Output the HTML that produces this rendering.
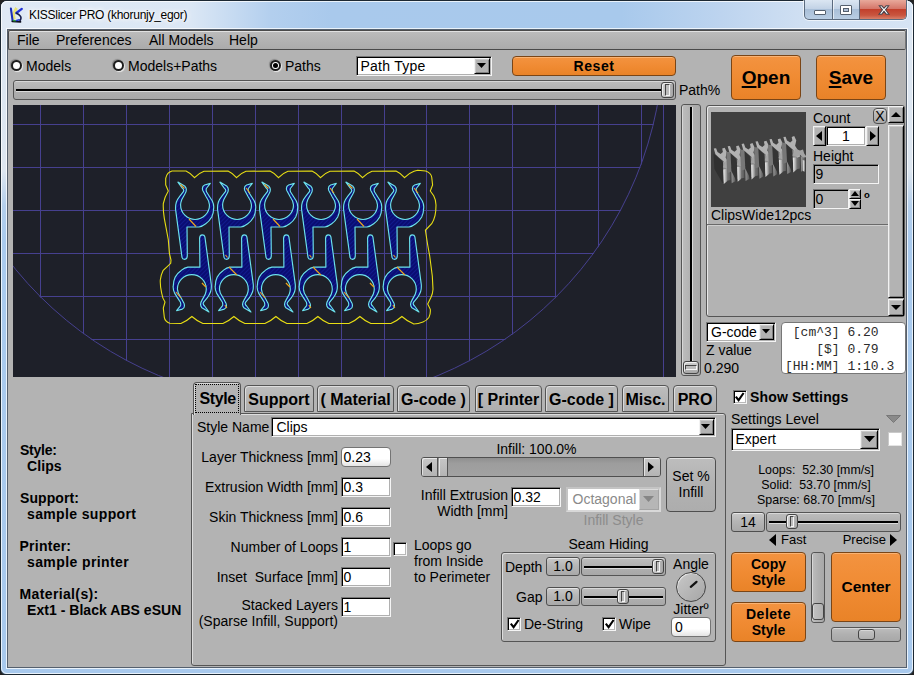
<!DOCTYPE html>
<html><head><meta charset="utf-8"><title>KISSlicer PRO</title>
<style>
html,body{margin:0;padding:0;}
body{width:914px;height:675px;overflow:hidden;position:relative;background:#222;font-family:"Liberation Sans",Arial,sans-serif;font-size:14px;color:#000;}
#win{position:absolute;left:0;top:0;width:914px;height:675px;overflow:hidden;}
#win div,#win svg{position:absolute;box-sizing:border-box;}
#frame{left:0;top:0;width:914px;height:675px;border-radius:7px 7px 6px 6px;background:linear-gradient(#dbe6f2 0px,#dde6f0 170px,#b4cfec 205px,#a9caee 240px,#a8c9ed 675px);border:1px solid #1c2833;}
#titlebg{left:1px;top:1px;width:912px;height:29px;border-radius:6px 6px 0 0;background:linear-gradient(90deg,#dfe9f5 0,#dbe7f5 190px,#b3cfee 270px,#a9c9ec 330px,#a8c9ec 620px,#bdd4ef 720px,#cfdff2 800px,#d6e4f4 912px);}
#frame2{left:1px;top:1px;width:912px;height:673px;border-radius:6px;border:1px solid rgba(255,255,255,.75);}
#client{left:8px;top:30px;width:898px;height:637px;background:#b3b3b3;overflow:hidden;}
#c{left:-8px;top:-30px;width:914px;height:675px;}
#clientedge{left:7px;top:29px;width:900px;height:639px;border:1px solid #55606e;box-shadow:0 0 0 1px rgba(255,255,255,.75);}
.t{white-space:nowrap;line-height:16px;height:16px;}
.b{font-weight:bold;}
.r{text-align:right;}
.ct{text-align:center;}
/* raised gray box */
.up{background:linear-gradient(#c9c9c9,#b6b6b6 45%,#a9a9a9);border:1px solid #4f4f4f;border-radius:3px;box-shadow:inset 0 1px 0 rgba(255,255,255,.55);}
/* orange button */
.ob u{text-underline-offset:2px;text-decoration-thickness:2px;}
.ob{background:linear-gradient(#f39340,#f08b33 50%,#e98328);border:1px solid #7a4516;border-radius:4px;box-shadow:inset 0 1px 0 rgba(255,200,150,.6);font-weight:bold;text-align:center;white-space:nowrap;}
/* sunken input */
.in{background:#fff;border:1px solid;border-color:#777 #f4f4f4 #f4f4f4 #777;box-shadow:inset 1px 1px 0 #000, inset -1px -1px 0 #b0b0b0;white-space:nowrap;line-height:17px;padding-left:1.5px;padding-top:1px;overflow:hidden;}
.ing{background:#b3b3b3;}
/* slider track box */
.sl{background:linear-gradient(#bdbdbd,#b0b0b0 50%,#a8a8a8);border:1px solid #555;border-radius:3px;box-shadow:inset 0 1px 0 rgba(255,255,255,.4);}
.slv{background:linear-gradient(90deg,#bdbdbd,#b0b0b0 50%,#a8a8a8);border:1px solid #555;border-radius:3px;box-shadow:inset 1px 0 0 rgba(255,255,255,.4);}
.kn{background:linear-gradient(90deg,#d0d0d0,#bdbdbd 50%,#a6a6a6);border:1px solid #444;border-radius:3px;box-shadow:inset 1px 1px 0 rgba(255,255,255,.7);}
.knv{background:linear-gradient(#d0d0d0,#bdbdbd 50%,#a6a6a6);border:1px solid #444;border-radius:3px;box-shadow:inset 1px 1px 0 rgba(255,255,255,.7);}
.blk{background:#000;box-shadow:0 1px 0 rgba(255,255,255,.55);}
.blkv{background:#000;box-shadow:1px 0 0 rgba(255,255,255,.55);}
.cb{width:14px;height:14px;background:#fff;border:1px solid;border-color:#777 #f4f4f4 #f4f4f4 #777;box-shadow:inset 1px 1px 0 #000, inset -1px -1px 0 #b8b8b8;}
.radio{width:11px;height:11px;border-radius:50%;background:#fff;border:2px solid #1e1e1e;box-shadow:-1px -1px 1px rgba(0,0,0,.25), 1px 1px 1px rgba(255,255,255,.75);}
svg{overflow:visible;}
.tab{height:27px;border:1px solid #555;border-radius:4px 4px 0 0;background:linear-gradient(#bdbdbd,#aeaeae);box-shadow:inset 1px 1px 0 rgba(255,255,255,.5);font-weight:bold;font-size:16px;line-height:27px;text-align:center;white-space:nowrap;}
.tab.sel{background:#b3b3b3;line-height:31px;border-bottom:none;}
.foc{border:1px dotted #000;}
.cbtn{background:#b3b3b3;border:1px solid;border-color:#f2f2f2 #000 #000 #f2f2f2;box-shadow:inset 1px 1px 0 #c8c8c8, inset -1px -1px 0 #808080;}

</style></head><body>
<div id="win">
<div id="frame"></div><div id="titlebg"></div><div id="frame2"></div>
<div id="clientedge"></div>
<svg id="appicon" style="left:0;top:0" width="30" height="30" viewBox="0 0 30 30">
<path d="M15.3 7 L17.7 8.7 L15 14.3 L15.7 19.3 L13.3 19 L12.3 13.3 Z" fill="#e9e274"/>
<path d="M10.9 8.6 L12.6 20.6" stroke="#1c2fb8" stroke-width="2.1" stroke-linecap="round" fill="none"/>
<path d="M21.8 8.9 L16.3 13" stroke="#2232d8" stroke-width="2.3" stroke-linecap="round" fill="none"/>
<path d="M16.6 13.2 Q21 15.5 21 18 Q20.8 20 19.8 21" stroke="#141c4a" stroke-width="1.6" fill="none" stroke-linecap="round"/>
<path d="M12.3 21.4 L20.5 21.9" stroke="#0c1020" stroke-width="1.7" stroke-linecap="round" fill="none"/>
<path d="M13.5 20.5 L15.2 20.7" stroke="#2e9a3c" stroke-width="1.6" stroke-linecap="round"/>
<path d="M16.5 20.4 L19.3 19.8" stroke="#2438d0" stroke-width="1.5" stroke-linecap="round"/>
</svg>
<div id="title" class="t" style="left:29px;top:7px;font-size:12px;letter-spacing:-0.27px;text-shadow:0 0 6px #fff,0 0 6px #fff,0 0 3px #fff;">KISSlicer PRO (khorunjy_egor)</div>
<div id="capbtns" style="left:804px;top:0;width:103px;height:20px;border:1px solid #5a6a7e;border-top:none;border-radius:0 0 5px 5px;background:linear-gradient(#dbe6f2,#c3d3e6 45%,#a9bfd8 50%,#b9cde3);overflow:hidden;box-shadow:0 0 0 1px rgba(255,255,255,.6);">
 <div style="left:55px;top:0;width:47px;height:19px;background:linear-gradient(#e8a99b,#d5776a 45%,#c2402c 50%,#c9553f 80%,#d8806a);"></div>
 <div style="left:27px;top:0;width:1px;height:19px;background:#5a6a7e"></div>
 <div style="left:28px;top:0;width:1px;height:19px;background:rgba(255,255,255,.6)"></div>
 <div style="left:54px;top:0;width:1px;height:19px;background:#5a6a7e"></div>
 <div style="left:9px;top:10px;width:12px;height:5px;background:#fff;border:1px solid #55606e;border-radius:1px"></div>
 <div style="left:35px;top:5px;width:12px;height:10px;background:#fff;border:1px solid #55606e;border-radius:1px"></div>
 <div style="left:38px;top:8px;width:6px;height:4px;background:#aebfd6;border:1px solid #55606e;"></div>
 <svg style="left:73px;top:5px" width="12" height="10" viewBox="0 0 14 12" preserveAspectRatio="none"><path d="M1.5 1 L4.5 1 L7 4 L9.5 1 L12.5 1 L8.8 5.8 L12.8 11 L9.6 11 L7 7.6 L4.4 11 L1.2 11 L5.2 5.8 Z" fill="#fff" stroke="#46414a" stroke-width="1.2"/></svg>
</div>

<div id="client"><div id="c">
<!-- menu bar -->
<div class="up" style="left:8px;top:30px;width:898px;height:20px;border-radius:2px;border-color:#4a4a4a #777 #4a4a4a #4a4a4a;background:linear-gradient(#bcbcbc,#b3b3b3 50%,#ababab)"></div>
<div class="t" style="left:17px;top:32px">File</div>
<div class="t" style="left:56px;top:32px">Preferences</div>
<div class="t" style="left:149px;top:32px">All Models</div>
<div class="t" style="left:229px;top:32px">Help</div>
<!-- radios -->
<div class="radio" style="left:11px;top:60px"></div><div class="t" style="left:26px;top:58px">Models</div>
<div class="radio" style="left:113px;top:60px"></div><div class="t" style="left:128px;top:58px">Models+Paths</div>
<div class="radio" style="left:270px;top:60px"></div><div style="left:273px;top:63px;width:5px;height:5px;border-radius:50%;background:#000"></div><div class="t" style="left:285px;top:58px">Paths</div>
<!-- path type -->
<div class="in" style="left:356px;top:56px;width:136px;height:20px;padding-left:3.5px;letter-spacing:0.25px">Path Type</div>
<div class="cbtn" style="left:474px;top:58px;width:16px;height:16px"></div>
<svg style="left:477px;top:63px" width="9" height="5"><path d="M0 0H9L4.5 5Z" fill="#000"/></svg>
<!-- reset -->
<div class="ob" style="left:512px;top:56px;width:164px;height:20px;font-size:14px;line-height:18px;border-radius:4px;letter-spacing:0.6px">Reset</div>
<!-- h slider -->
<div class="sl" style="left:13px;top:80px;width:663px;height:20px"></div>
<div class="blk" style="left:16px;top:89px;width:657px;height:2px"></div>
<div class="kn" style="left:661px;top:82px;width:13px;height:16px"></div>
<div style="left:665px;top:84px;width:5px;height:12px;border:1px solid;border-color:#444 #f4f4f4 #f4f4f4 #444;background:#bcbcbc"></div>
<div class="t" style="left:679px;top:82px">Path%</div>
<!-- open/save -->
<div class="ob" style="left:731px;top:55px;width:70px;height:45px;font-size:19px;line-height:43px"><u>O</u>pen</div>
<div class="ob" style="left:816px;top:55px;width:70px;height:45px;font-size:19px;line-height:43px"><u>S</u>ave</div>
<div id="vp" style="left:13px;top:105px;width:663px;height:272px;background:#1e2029;overflow:hidden">
<svg width="663" height="272" viewBox="13 105 663 272" style="left:0;top:0;overflow:hidden">
<defs><clipPath id="bedclip"><circle cx="298.3" cy="38" r="365.8"/></clipPath></defs>
<path d="M40.2 100V380M83.9 100V380M126.7 100V380M169.6 100V380M212.5 100V380M255.3 100V380M298.2 100V380M341.1 100V380M384.0 100V380M426.8 100V380M469.7 100V380M512.6 100V380M555.4 100V380M598.3 100V380M641.2 100V380M0 124H700M0 167H700M0 210H700M0 253H700M0 296H700M0 339H700" stroke="#46408f" stroke-width="1" fill="none" shape-rendering="crispEdges" clip-path="url(#bedclip)"/>
<path d="M663.5 100V380" stroke="#46408f" stroke-width="1" fill="none" shape-rendering="crispEdges"/>
<circle cx="298.3" cy="38" r="365.3" fill="none" stroke="#46408f" stroke-width="1"/>
<defs><pattern id="hatch" width="3" height="3" patternUnits="userSpaceOnUse" patternTransform="rotate(45)"><rect width="3" height="3" fill="#0a0d72"/><rect width="1" height="3" fill="#101a8c"/></pattern></defs>
<path d="M172,171 L186.0,171 Q191.0,173.3 194.5,177.7 Q198.5,173.3 204.0,171.3 L228.0,171 Q233.0,173.3 236.5,177.7 Q240.5,173.3 246.0,171.3 L270.0,171 Q275.0,173.3 278.5,177.7 Q282.5,173.3 288.0,171.3 L312.0,171 Q317.0,173.3 320.5,177.7 Q324.5,173.3 330.0,171.3 L354.0,171 Q359.0,173.3 362.5,177.7 Q366.5,173.3 372.0,171.3 L396.0,171 Q401.0,173.3 404.5,177.7 Q408.5,173.3 414.0,171.3 L417.7,170.3 L425.7,171 Q431,173 431.7,177 L432.6,185 L430.3,191 L433.7,195.7 Q436,200 436,205 Q436,211 435,215.7 Q434,220 431.7,223.7 L425.4,230.3 L427.7,245 L429.7,256 L432.3,276 L433,289.3 Q432.7,294 431,297.3 L427.7,304 L430.3,309.3 Q430.7,314 429,317.3 Q427,320.5 423,322 Q418,324 413.7,324 L412.9,323.5 Q406.9,321 401.9,316.5 Q396.9,321 390.9,323.5 L370.9,323.5 Q364.9,321 359.9,316.5 Q354.9,321 348.9,323.5 L328.9,323.5 Q322.9,321 317.9,316.5 Q312.9,321 306.9,323.5 L286.9,323.5 Q280.9,321 275.9,316.5 Q270.9,321 264.9,323.5 L244.9,323.5 Q238.9,321 233.9,316.5 Q228.9,321 222.9,323.5 L202.9,323.5 Q196.9,321 191.9,316.5 Q186.9,321 180.9,323.5 L169.7,323.3 Q165,321.5 164.3,317.3 L163.3,308 L165,302 Q162.3,298 161.7,293.3 Q160,286 160.3,280 Q161,274.5 163,270.7 L170.7,263.3 L171,260 L169.4,253.3 L168.3,239.7 L164.3,218.3 Q163,210 163.3,203.7 Q164.5,197 168.3,191 L165.7,185 L165.7,178.3 Q167,172.3 172,171 Z" fill="none" stroke="#e8de14" stroke-width="1.1"/>
<path transform="translate(195,205)" d="M-17.1,-22.9 L-10,-18.7 Q-7.3,-15.5 -10,-11.3 L-13.3,-5.3 Q-14.4,-2.5 -14.4,0 A14.4,14.4 0 0 0 14.5,0 Q14.3,-4 11.3,-8 L7.8,-14.5 Q6.5,-18.5 9.6,-20 L15.3,-21.6 L11.3,-16.5 Q10.6,-13.5 12.7,-11.3 L17.3,-4 Q19,-0.5 18.7,2.7 Q18.6,8 16.7,12 Q14.2,16.4 10.7,18.7 Q7,21.5 4,22 L-8,22 L-7.7,51 Q-7.9,54.3 -10.3,54.3 Q-12.6,54.3 -13,52.3 L-19.3,5.3 Q-19.8,1 -18.7,-2.7 Q-17.5,-6 -15.3,-8.7 L-11.6,-13.3 Q-10.6,-15.2 -12.7,-16.9 Z" fill="url(#hatch)" stroke="#6ce2ec" stroke-width="1.15" stroke-linejoin="round"/>
<path transform="translate(191.9,289.1) rotate(180)" d="M-17.1,-22.9 L-10,-18.7 Q-7.3,-15.5 -10,-11.3 L-13.3,-5.3 Q-14.4,-2.5 -14.4,0 A14.4,14.4 0 0 0 14.5,0 Q14.3,-4 11.3,-8 L7.8,-14.5 Q6.5,-18.5 9.6,-20 L15.3,-21.6 L11.3,-16.5 Q10.6,-13.5 12.7,-11.3 L17.3,-4 Q19,-0.5 18.7,2.7 Q18.6,8 16.7,12 Q14.2,16.4 10.7,18.7 Q7,21.5 4,22 L-8,22 L-7.7,51 Q-7.9,54.3 -10.3,54.3 Q-12.6,54.3 -13,52.3 L-19.3,5.3 Q-19.8,1 -18.7,-2.7 Q-17.5,-6 -15.3,-8.7 L-11.6,-13.3 Q-10.6,-15.2 -12.7,-16.9 Z" fill="url(#hatch)" stroke="#6ce2ec" stroke-width="1.15" stroke-linejoin="round"/>
<path transform="translate(237,205)" d="M-17.1,-22.9 L-10,-18.7 Q-7.3,-15.5 -10,-11.3 L-13.3,-5.3 Q-14.4,-2.5 -14.4,0 A14.4,14.4 0 0 0 14.5,0 Q14.3,-4 11.3,-8 L7.8,-14.5 Q6.5,-18.5 9.6,-20 L15.3,-21.6 L11.3,-16.5 Q10.6,-13.5 12.7,-11.3 L17.3,-4 Q19,-0.5 18.7,2.7 Q18.6,8 16.7,12 Q14.2,16.4 10.7,18.7 Q7,21.5 4,22 L-8,22 L-7.7,51 Q-7.9,54.3 -10.3,54.3 Q-12.6,54.3 -13,52.3 L-19.3,5.3 Q-19.8,1 -18.7,-2.7 Q-17.5,-6 -15.3,-8.7 L-11.6,-13.3 Q-10.6,-15.2 -12.7,-16.9 Z" fill="url(#hatch)" stroke="#6ce2ec" stroke-width="1.15" stroke-linejoin="round"/>
<path transform="translate(233.9,289.1) rotate(180)" d="M-17.1,-22.9 L-10,-18.7 Q-7.3,-15.5 -10,-11.3 L-13.3,-5.3 Q-14.4,-2.5 -14.4,0 A14.4,14.4 0 0 0 14.5,0 Q14.3,-4 11.3,-8 L7.8,-14.5 Q6.5,-18.5 9.6,-20 L15.3,-21.6 L11.3,-16.5 Q10.6,-13.5 12.7,-11.3 L17.3,-4 Q19,-0.5 18.7,2.7 Q18.6,8 16.7,12 Q14.2,16.4 10.7,18.7 Q7,21.5 4,22 L-8,22 L-7.7,51 Q-7.9,54.3 -10.3,54.3 Q-12.6,54.3 -13,52.3 L-19.3,5.3 Q-19.8,1 -18.7,-2.7 Q-17.5,-6 -15.3,-8.7 L-11.6,-13.3 Q-10.6,-15.2 -12.7,-16.9 Z" fill="url(#hatch)" stroke="#6ce2ec" stroke-width="1.15" stroke-linejoin="round"/>
<path transform="translate(279,205)" d="M-17.1,-22.9 L-10,-18.7 Q-7.3,-15.5 -10,-11.3 L-13.3,-5.3 Q-14.4,-2.5 -14.4,0 A14.4,14.4 0 0 0 14.5,0 Q14.3,-4 11.3,-8 L7.8,-14.5 Q6.5,-18.5 9.6,-20 L15.3,-21.6 L11.3,-16.5 Q10.6,-13.5 12.7,-11.3 L17.3,-4 Q19,-0.5 18.7,2.7 Q18.6,8 16.7,12 Q14.2,16.4 10.7,18.7 Q7,21.5 4,22 L-8,22 L-7.7,51 Q-7.9,54.3 -10.3,54.3 Q-12.6,54.3 -13,52.3 L-19.3,5.3 Q-19.8,1 -18.7,-2.7 Q-17.5,-6 -15.3,-8.7 L-11.6,-13.3 Q-10.6,-15.2 -12.7,-16.9 Z" fill="url(#hatch)" stroke="#6ce2ec" stroke-width="1.15" stroke-linejoin="round"/>
<path transform="translate(275.9,289.1) rotate(180)" d="M-17.1,-22.9 L-10,-18.7 Q-7.3,-15.5 -10,-11.3 L-13.3,-5.3 Q-14.4,-2.5 -14.4,0 A14.4,14.4 0 0 0 14.5,0 Q14.3,-4 11.3,-8 L7.8,-14.5 Q6.5,-18.5 9.6,-20 L15.3,-21.6 L11.3,-16.5 Q10.6,-13.5 12.7,-11.3 L17.3,-4 Q19,-0.5 18.7,2.7 Q18.6,8 16.7,12 Q14.2,16.4 10.7,18.7 Q7,21.5 4,22 L-8,22 L-7.7,51 Q-7.9,54.3 -10.3,54.3 Q-12.6,54.3 -13,52.3 L-19.3,5.3 Q-19.8,1 -18.7,-2.7 Q-17.5,-6 -15.3,-8.7 L-11.6,-13.3 Q-10.6,-15.2 -12.7,-16.9 Z" fill="url(#hatch)" stroke="#6ce2ec" stroke-width="1.15" stroke-linejoin="round"/>
<path transform="translate(321,205)" d="M-17.1,-22.9 L-10,-18.7 Q-7.3,-15.5 -10,-11.3 L-13.3,-5.3 Q-14.4,-2.5 -14.4,0 A14.4,14.4 0 0 0 14.5,0 Q14.3,-4 11.3,-8 L7.8,-14.5 Q6.5,-18.5 9.6,-20 L15.3,-21.6 L11.3,-16.5 Q10.6,-13.5 12.7,-11.3 L17.3,-4 Q19,-0.5 18.7,2.7 Q18.6,8 16.7,12 Q14.2,16.4 10.7,18.7 Q7,21.5 4,22 L-8,22 L-7.7,51 Q-7.9,54.3 -10.3,54.3 Q-12.6,54.3 -13,52.3 L-19.3,5.3 Q-19.8,1 -18.7,-2.7 Q-17.5,-6 -15.3,-8.7 L-11.6,-13.3 Q-10.6,-15.2 -12.7,-16.9 Z" fill="url(#hatch)" stroke="#6ce2ec" stroke-width="1.15" stroke-linejoin="round"/>
<path transform="translate(317.9,289.1) rotate(180)" d="M-17.1,-22.9 L-10,-18.7 Q-7.3,-15.5 -10,-11.3 L-13.3,-5.3 Q-14.4,-2.5 -14.4,0 A14.4,14.4 0 0 0 14.5,0 Q14.3,-4 11.3,-8 L7.8,-14.5 Q6.5,-18.5 9.6,-20 L15.3,-21.6 L11.3,-16.5 Q10.6,-13.5 12.7,-11.3 L17.3,-4 Q19,-0.5 18.7,2.7 Q18.6,8 16.7,12 Q14.2,16.4 10.7,18.7 Q7,21.5 4,22 L-8,22 L-7.7,51 Q-7.9,54.3 -10.3,54.3 Q-12.6,54.3 -13,52.3 L-19.3,5.3 Q-19.8,1 -18.7,-2.7 Q-17.5,-6 -15.3,-8.7 L-11.6,-13.3 Q-10.6,-15.2 -12.7,-16.9 Z" fill="url(#hatch)" stroke="#6ce2ec" stroke-width="1.15" stroke-linejoin="round"/>
<path transform="translate(363,205)" d="M-17.1,-22.9 L-10,-18.7 Q-7.3,-15.5 -10,-11.3 L-13.3,-5.3 Q-14.4,-2.5 -14.4,0 A14.4,14.4 0 0 0 14.5,0 Q14.3,-4 11.3,-8 L7.8,-14.5 Q6.5,-18.5 9.6,-20 L15.3,-21.6 L11.3,-16.5 Q10.6,-13.5 12.7,-11.3 L17.3,-4 Q19,-0.5 18.7,2.7 Q18.6,8 16.7,12 Q14.2,16.4 10.7,18.7 Q7,21.5 4,22 L-8,22 L-7.7,51 Q-7.9,54.3 -10.3,54.3 Q-12.6,54.3 -13,52.3 L-19.3,5.3 Q-19.8,1 -18.7,-2.7 Q-17.5,-6 -15.3,-8.7 L-11.6,-13.3 Q-10.6,-15.2 -12.7,-16.9 Z" fill="url(#hatch)" stroke="#6ce2ec" stroke-width="1.15" stroke-linejoin="round"/>
<path transform="translate(359.9,289.1) rotate(180)" d="M-17.1,-22.9 L-10,-18.7 Q-7.3,-15.5 -10,-11.3 L-13.3,-5.3 Q-14.4,-2.5 -14.4,0 A14.4,14.4 0 0 0 14.5,0 Q14.3,-4 11.3,-8 L7.8,-14.5 Q6.5,-18.5 9.6,-20 L15.3,-21.6 L11.3,-16.5 Q10.6,-13.5 12.7,-11.3 L17.3,-4 Q19,-0.5 18.7,2.7 Q18.6,8 16.7,12 Q14.2,16.4 10.7,18.7 Q7,21.5 4,22 L-8,22 L-7.7,51 Q-7.9,54.3 -10.3,54.3 Q-12.6,54.3 -13,52.3 L-19.3,5.3 Q-19.8,1 -18.7,-2.7 Q-17.5,-6 -15.3,-8.7 L-11.6,-13.3 Q-10.6,-15.2 -12.7,-16.9 Z" fill="url(#hatch)" stroke="#6ce2ec" stroke-width="1.15" stroke-linejoin="round"/>
<path transform="translate(405,205)" d="M-17.1,-22.9 L-10,-18.7 Q-7.3,-15.5 -10,-11.3 L-13.3,-5.3 Q-14.4,-2.5 -14.4,0 A14.4,14.4 0 0 0 14.5,0 Q14.3,-4 11.3,-8 L7.8,-14.5 Q6.5,-18.5 9.6,-20 L15.3,-21.6 L11.3,-16.5 Q10.6,-13.5 12.7,-11.3 L17.3,-4 Q19,-0.5 18.7,2.7 Q18.6,8 16.7,12 Q14.2,16.4 10.7,18.7 Q7,21.5 4,22 L-8,22 L-7.7,51 Q-7.9,54.3 -10.3,54.3 Q-12.6,54.3 -13,52.3 L-19.3,5.3 Q-19.8,1 -18.7,-2.7 Q-17.5,-6 -15.3,-8.7 L-11.6,-13.3 Q-10.6,-15.2 -12.7,-16.9 Z" fill="url(#hatch)" stroke="#6ce2ec" stroke-width="1.15" stroke-linejoin="round"/>
<path transform="translate(401.9,289.1) rotate(180)" d="M-17.1,-22.9 L-10,-18.7 Q-7.3,-15.5 -10,-11.3 L-13.3,-5.3 Q-14.4,-2.5 -14.4,0 A14.4,14.4 0 0 0 14.5,0 Q14.3,-4 11.3,-8 L7.8,-14.5 Q6.5,-18.5 9.6,-20 L15.3,-21.6 L11.3,-16.5 Q10.6,-13.5 12.7,-11.3 L17.3,-4 Q19,-0.5 18.7,2.7 Q18.6,8 16.7,12 Q14.2,16.4 10.7,18.7 Q7,21.5 4,22 L-8,22 L-7.7,51 Q-7.9,54.3 -10.3,54.3 Q-12.6,54.3 -13,52.3 L-19.3,5.3 Q-19.8,1 -18.7,-2.7 Q-17.5,-6 -15.3,-8.7 L-11.6,-13.3 Q-10.6,-15.2 -12.7,-16.9 Z" fill="url(#hatch)" stroke="#6ce2ec" stroke-width="1.15" stroke-linejoin="round"/>
<path d="M189.0,219 L196.0,226.5 M180.5,184.5 L184.5,188.5 M201.9,283 L205.9,287 M175.9,292 L180.9,298 M246.0,188 L250.0,193 M225.5,255 L227.5,257.5 M228.9,267 L236.9,275 M224.9,305 L226.9,308 M273.0,219 L280.0,226.5 M264.5,184.5 L268.5,188.5 M285.9,283 L289.9,287 M259.9,292 L264.9,298 M330.0,188 L334.0,193 M309.5,255 L311.5,257.5 M312.9,267 L320.9,275 M308.9,305 L310.9,308 M357.0,219 L364.0,226.5 M348.5,184.5 L352.5,188.5 M369.9,283 L373.9,287 M343.9,292 L348.9,298 M414.0,188 L418.0,193 M393.5,255 L395.5,257.5 M396.9,267 L404.9,275 M392.9,305 L394.9,308" stroke="#f0a81c" stroke-width="1.1" fill="none"/>
</svg></div><!-- vertical z slider -->
<div class="slv" style="left:681px;top:104px;width:20px;height:272px"></div>
<div class="blkv" style="left:690px;top:107px;width:2px;height:266px"></div>
<div class="knv" style="left:683px;top:361px;width:16px;height:13px"></div>
<div style="left:685px;top:365px;width:12px;height:5px;border:1px solid;border-color:#444 #f4f4f4 #f4f4f4 #444;background:#bcbcbc"></div>
<!-- model list -->
<div id="mlist" style="left:706px;top:105px;width:199px;height:212px;border:1px solid #555;border-radius:3px;background:#b3b3b3;box-shadow:inset 1px 1px 0 rgba(255,255,255,.7)"></div>
<div style="left:711px;top:112px;width:95px;height:95px;background:#404040;overflow:hidden" id="thumb"><svg width="95" height="95" viewBox="0 0 95 95" style="left:0;top:0;overflow:hidden">
<defs><linearGradient id="tg1" x1="0" x2="1" y1="0" y2="0"><stop offset="0" stop-color="#f0f0f0"/><stop offset="1" stop-color="#8c8c8c"/></linearGradient>
<linearGradient id="tg2" x1="0" x2="1" y1="0" y2="0"><stop offset="0" stop-color="#9a9a9a"/><stop offset="1" stop-color="#5a5a5a"/></linearGradient></defs>
<polygon points="2.5,41.6 8.1,46.1 11.9,50.2 12.8,71.8 11.3,70.7 3.4,57.1" fill="#303030"/>
<polygon points="11.9,49.1 19.5,56.7 19.5,68.0 12.8,69.5" fill="url(#tg2)"/>
<polygon points="12.4,57.4 16.1,56.8 16.1,69.2 12.8,72.1" fill="url(#tg1)"/>
<polygon points="20.2,56.2 24.3,55.6 24.3,69.2 20.7,71.3" fill="url(#tg2)"/>
<polygon points="2.8,36.6 5.1,36.3 6.5,40.1 9.6,42.0 11.9,40.1 11.2,36.6 13.7,35.7 15.8,40.1 14.6,45.4 17.4,49.9 19.8,56.2 16.4,57.4 12.7,49.6 8.1,45.7 4.4,42.3" fill="#b2b2b2"/>
<polygon points="14.9,48.4 19.5,50.2 22.5,49.1 23.7,53.2 26.4,56.7 22.5,57.1 19.5,54.4 15.8,56.7 11.9,55.2" fill="#a4a4a4"/>
<polygon points="15.2,40.0 20.1,40.0 20.7,59.6 16.1,61.2" fill="#777"/>
<polygon points="19.5,40.0 22.0,43.8 25.8,47.9 26.7,69.5 25.2,68.4 20.4,58.9" fill="#343434"/>
<polygon points="25.8,46.8 33.4,54.4 33.4,65.7 26.7,67.2" fill="url(#tg2)"/>
<polygon points="26.3,55.1 30.0,54.5 30.0,66.9 26.7,69.8" fill="url(#tg1)"/>
<polygon points="34.1,53.9 38.2,53.3 38.2,66.9 34.6,69.0" fill="url(#tg2)"/>
<polygon points="16.7,34.3 19.0,34.0 20.4,37.7 23.5,39.7 25.8,37.7 25.1,34.3 27.6,33.4 29.7,37.7 28.5,43.0 31.3,47.6 33.7,53.9 30.3,55.1 26.6,47.3 22.0,43.3 18.3,40.0" fill="#b2b2b2"/>
<polygon points="28.8,46.0 33.4,47.9 36.4,46.8 37.6,50.9 40.3,54.4 36.4,54.8 33.4,52.1 29.7,54.4 25.8,52.8" fill="#a4a4a4"/>
<polygon points="29.1,37.7 34.0,37.7 34.6,57.3 30.0,58.8" fill="#777"/>
<polygon points="33.4,37.7 35.9,41.5 39.7,45.5 40.6,67.1 39.1,66.1 34.3,56.6" fill="#343434"/>
<polygon points="39.7,44.5 47.3,52.0 47.3,63.4 40.6,64.9" fill="url(#tg2)"/>
<polygon points="40.2,52.8 43.9,52.2 43.9,64.6 40.6,67.4" fill="url(#tg1)"/>
<polygon points="48.0,51.6 52.1,51.0 52.1,64.6 48.5,66.7" fill="url(#tg2)"/>
<polygon points="30.6,31.9 32.9,31.6 34.3,35.4 37.4,37.4 39.7,35.4 39.0,31.9 41.5,31.0 43.6,35.4 42.4,40.7 45.2,45.2 47.6,51.6 44.2,52.8 40.5,44.9 35.9,41.0 32.2,37.7" fill="#b2b2b2"/>
<polygon points="42.7,43.7 47.3,45.5 50.3,44.5 51.5,48.6 54.2,52.0 50.3,52.5 47.3,49.8 43.6,52.0 39.7,50.5" fill="#a4a4a4"/>
<polygon points="43.0,35.3 47.9,35.3 48.5,55.0 43.9,56.5" fill="#777"/>
<polygon points="47.3,35.3 49.8,39.1 53.6,43.2 54.5,64.8 53.0,63.8 48.2,54.2" fill="#343434"/>
<polygon points="53.6,42.1 61.2,49.7 61.2,61.0 54.5,62.5" fill="url(#tg2)"/>
<polygon points="54.1,50.5 57.8,49.9 57.8,62.2 54.5,65.1" fill="url(#tg1)"/>
<polygon points="61.9,49.3 66.0,48.6 66.0,62.2 62.4,64.4" fill="url(#tg2)"/>
<polygon points="44.5,29.6 46.8,29.3 48.2,33.1 51.3,35.0 53.6,33.1 52.9,29.6 55.4,28.7 57.5,33.1 56.3,38.4 59.1,42.9 61.5,49.3 58.1,50.5 54.4,42.6 49.8,38.7 46.1,35.3" fill="#b2b2b2"/>
<polygon points="56.6,41.4 61.2,43.2 64.2,42.1 65.4,46.2 68.1,49.7 64.2,50.2 61.2,47.4 57.5,49.7 53.6,48.2" fill="#a4a4a4"/>
<polygon points="56.9,33.0 61.8,33.0 62.4,52.7 57.8,54.2" fill="#777"/>
<polygon points="61.2,33.0 63.7,36.8 67.5,40.9 68.4,62.5 66.9,61.4 62.1,51.9" fill="#343434"/>
<polygon points="67.5,39.8 75.1,47.4 75.1,58.7 68.4,60.2" fill="url(#tg2)"/>
<polygon points="68.0,48.1 71.7,47.5 71.7,59.9 68.4,62.8" fill="url(#tg1)"/>
<polygon points="75.8,46.9 79.9,46.3 79.9,59.9 76.3,62.0" fill="url(#tg2)"/>
<polygon points="58.5,27.3 60.7,27.0 62.1,30.8 65.2,32.7 67.5,30.8 66.8,27.3 69.3,26.4 71.4,30.8 70.2,36.0 73.0,40.6 75.4,46.9 72.0,48.1 68.3,40.3 63.7,36.3 60.0,33.0" fill="#b2b2b2"/>
<polygon points="70.5,39.1 75.1,40.9 78.1,39.8 79.3,43.9 82.0,47.4 78.1,47.8 75.1,45.1 71.4,47.4 67.5,45.9" fill="#a4a4a4"/>
<polygon points="70.8,30.7 75.7,30.7 76.3,50.3 71.7,51.9" fill="#777"/>
<polygon points="75.1,30.7 77.6,34.5 81.4,38.6 82.3,60.2 80.8,59.1 76.0,49.6" fill="#343434"/>
<polygon points="81.4,37.5 89.0,45.1 89.0,56.4 82.3,57.9" fill="url(#tg2)"/>
<polygon points="81.9,45.8 85.6,45.2 85.6,57.6 82.3,60.5" fill="url(#tg1)"/>
<polygon points="89.7,44.6 93.8,44.0 93.8,57.6 90.2,59.7" fill="url(#tg2)"/>
<polygon points="72.4,25.0 74.6,24.7 76.0,28.4 79.2,30.4 81.4,28.4 80.7,25.0 83.2,24.0 85.3,28.4 84.1,33.7 86.9,38.3 89.3,44.6 86.0,45.8 82.2,37.9 77.6,34.0 73.9,30.7" fill="#b2b2b2"/>
<polygon points="84.4,36.7 89.0,38.6 92.0,37.5 93.2,41.6 95.9,45.1 92.0,45.5 89.0,42.8 85.3,45.1 81.4,43.5" fill="#a4a4a4"/>
<polygon points="91.7,48.1 93.5,48.4 93.5,59.7 92.0,59.0" fill="#d0d0d0"/>
</svg></div>
<div class="t" style="left:813px;top:110px">Count</div>
<div class="up" style="left:873px;top:108px;width:14px;height:16px;border-radius:4px;font-size:14px;line-height:14px;text-align:center">X</div>
<!-- scrollbar -->
<div style="left:888px;top:106px;width:16px;height:210px;background:#9c9c9c"></div>
<div class="cbtn" style="left:888px;top:106px;width:16px;height:17px"></div>
<svg style="left:891px;top:112px" width="10" height="5"><path d="M0 5H10L5 0Z"/></svg>
<div class="cbtn" style="left:888px;top:125px;width:16px;height:173px"></div>
<div class="cbtn" style="left:888px;top:299px;width:16px;height:17px"></div>
<svg style="left:891px;top:305px" width="10" height="5"><path d="M0 0H10L5 5Z"/></svg>
<!-- count spinner -->
<div class="cbtn" style="left:813px;top:126px;width:13px;height:20px"></div>
<svg style="left:816px;top:131px" width="6" height="10"><path d="M6 0V10L0 5Z"/></svg>
<div class="in ct" style="left:826px;top:126px;width:40px;height:20px;padding:1px 0 0 0">1</div>
<div class="cbtn" style="left:866px;top:126px;width:13px;height:20px"></div>
<svg style="left:870px;top:131px" width="6" height="10"><path d="M0 0V10L6 5Z"/></svg>
<div class="t" style="left:813px;top:148px">Height</div>
<div class="in ing" style="left:813px;top:164px;width:66px;height:20px">9</div>
<div class="in ing" style="left:813px;top:189px;width:36px;height:20px">0</div>
<div class="cbtn" style="left:849px;top:189px;width:12px;height:10px"></div>
<div class="cbtn" style="left:849px;top:199px;width:12px;height:10px"></div>
<svg style="left:851px;top:191px" width="8" height="5"><path d="M0 5H8L4 0Z"/></svg>
<svg style="left:851px;top:201px" width="8" height="5"><path d="M0 0H8L4 5Z"/></svg>
<div class="t b" style="left:864px;top:187px;font-size:9.5px">o</div>
<div class="t" style="left:711px;top:207px">ClipsWide12pcs</div>
<div style="left:707px;top:224px;width:181px;height:1px;background:#6a6a6a"></div>
<div style="left:707px;top:225px;width:181px;height:1px;background:#cfcfcf"></div>
<!-- gcode dropdown + stats -->
<div class="in" style="left:706px;top:322px;width:70px;height:20px;padding-left:4px">G-code</div>
<div class="cbtn" style="left:759px;top:324px;width:15px;height:16px"></div>
<svg style="left:762px;top:329px" width="8" height="5"><path d="M0 0H8L4 4.6Z"/></svg>
<div class="t" style="left:706px;top:342px">Z value</div>
<div class="t" style="left:704px;top:360px">0.290</div>
<div style="left:781px;top:322px;width:125px;height:52px;background:#fff;border:1px solid #777;border-radius:4px"></div>
<div class="t" style="left:785px;top:325px;width:115px;font-family:'Liberation Mono',monospace;font-size:13px;white-space:pre;color:#2c2c2c;"> [cm^3] 6.20</div>
<div class="t" style="left:785px;top:342px;width:115px;font-family:'Liberation Mono',monospace;font-size:13px;white-space:pre;color:#2c2c2c;">    [$] 0.79</div>
<div class="t" style="left:785px;top:359px;width:115px;font-family:'Liberation Mono',monospace;font-size:13px;white-space:pre;color:#2c2c2c;">[HH:MM] 1:10.3</div>
<div class="t b" style="left:20px;top:442px;letter-spacing:-0.23px">Style:</div>
<div class="t b" style="left:27px;top:458px;letter-spacing:0.1px">Clips</div>
<div class="t b" style="left:20px;top:490px;letter-spacing:0.07px">Support:</div>
<div class="t b" style="left:27px;top:506px;letter-spacing:0.36px">sample support</div>
<div class="t b" style="left:19.5px;top:538px;letter-spacing:0.25px">Printer:</div>
<div class="t b" style="left:27px;top:554px;letter-spacing:0.4px">sample printer</div>
<div class="t b" style="left:19.5px;top:586px;letter-spacing:0.37px">Material(s):</div>
<div class="t b" style="left:27px;top:602px;letter-spacing:0.04px">Ext1 - Black ABS eSUN</div>
<!-- tab panel -->
<div id="tabpanel" style="left:191px;top:413px;width:535px;height:253px;background:#b3b3b3;border:1px solid #555;border-radius:0 3px 3px 3px;box-shadow:inset 1px 1px 0 rgba(255,255,255,.55)"></div>
<!-- tabs -->
<div class="tab sel" style="left:193px;top:382px;width:48px;height:33px;letter-spacing:-0.4px;text-align:left;padding-left:5.5px"><span>Style</span></div>
<div class="foc" style="left:195px;top:384px;width:44px;height:29px"></div>
<div class="tab" style="left:244px;top:385px;width:70px"><span>Support</span></div>
<div class="tab" style="left:317px;top:385px;width:77px"><span>( Material</span></div>
<div class="tab" style="left:397px;top:385px;width:73px"><span>G-code )</span></div>
<div class="tab" style="left:475px;top:385px;width:67px"><span>[ Printer</span></div>
<div class="tab" style="left:545px;top:385px;width:73px"><span>G-code ]</span></div>
<div class="tab" style="left:622px;top:385px;width:47px"><span>Misc.</span></div>
<div class="tab" style="left:673px;top:385px;width:44px"><span>PRO</span></div>
<!-- style tab content -->
<div class="t" style="left:197px;top:419px">Style Name</div>
<div class="in" style="left:271px;top:417px;width:445px;height:20px;padding-left:4.5px">Clips</div>
<div class="cbtn" style="left:699px;top:419px;width:15px;height:16px"></div>
<svg style="left:701px;top:424px" width="9" height="5"><path d="M0 0H9L4.5 5Z"/></svg>

<div class="t r" style="left:191px;top:449px;width:147px">Layer Thickness [mm]</div>
<div class="in" style="left:341px;top:447px;width:50px;height:20px;border-radius:4px;border:1px solid #747474;box-shadow:none;background:linear-gradient(#fff 60%,#e4e4e4)">0.23</div>
<div class="t r" style="left:191px;top:479px;width:147px">Extrusion Width [mm]</div>
<div class="in" style="left:341px;top:477px;width:50px;height:20px">0.3</div>
<div class="t r" style="left:191px;top:509px;width:147px">Skin Thickness [mm]</div>
<div class="in" style="left:341px;top:507px;width:50px;height:20px">0.6</div>
<div class="t r" style="left:191px;top:539px;width:147px">Number of Loops</div>
<div class="in" style="left:341px;top:537px;width:50px;height:20px">1</div>
<div class="cb" style="left:393px;top:542px"></div>
<div class="t r" style="left:191px;top:569px;width:147px;white-space:pre">Inset  Surface [mm]</div>
<div class="in" style="left:341px;top:567px;width:50px;height:20px">0</div>
<div class="t r" style="left:191px;top:597px;width:147px">Stacked Layers</div>
<div class="t r" style="left:191px;top:613px;width:147px">(Sparse Infill, Support)</div>
<div class="in" style="left:341px;top:597px;width:50px;height:20px">1</div>

<div class="t" style="left:414px;top:536.5px">Loops go</div>
<div class="t" style="left:414px;top:552.5px">from Inside</div>
<div class="t" style="left:414px;top:568.5px">to Perimeter</div>

<!-- infill -->
<div class="t ct" style="left:417px;top:441px;width:239px">Infill: 100.0%</div>
<div style="left:421px;top:457px;width:240px;height:20px;background:linear-gradient(#8f8f8f,#9d9d9d 30%,#a2a2a2);border:1px solid #4f4f4f;border-radius:3px"></div>
<div style="left:422px;top:458px;width:16px;height:18px;border-radius:2px 0 0 2px;background:linear-gradient(#c6c6c6,#b4b4b4);border-right:1px solid #555;box-shadow:inset 1px 1px 0 rgba(255,255,255,.6)"></div>
<svg style="left:426px;top:462px" width="6" height="10"><path d="M6 0V10L0 5Z"/></svg>
<div style="left:439px;top:458px;width:9px;height:18px;background:linear-gradient(#c6c6c6,#b4b4b4);border-right:1px solid #555;box-shadow:inset 1px 1px 0 rgba(255,255,255,.6)"></div>
<div style="left:643px;top:458px;width:17px;height:18px;border-radius:0 2px 2px 0;background:linear-gradient(#c6c6c6,#b4b4b4);border-left:1px solid #555;box-shadow:inset 1px 1px 0 rgba(255,255,255,.6)"></div>
<svg style="left:648px;top:462px" width="6" height="10"><path d="M0 0V10L6 5Z"/></svg>
<div class="up t ct" style="left:666px;top:457px;width:50px;height:55px;line-height:16px;padding-top:10px;white-space:normal;border-radius:4px;background:linear-gradient(#bdbdbd,#b2b2b2 50%,#adadad)">Set % Infill</div>
<div class="t r" style="left:411px;top:487px;width:97px">Infill Extrusion</div>
<div class="t r" style="left:411px;top:503px;width:97px">Width [mm]</div>
<div class="in" style="left:511px;top:487px;width:50px;height:20px">0.32</div>
<div style="left:566px;top:487px;width:95px;height:25px;line-height:21px;padding-left:4.5px;color:#8a8a8a;background:#fff;border:2px solid;border-color:#c4c4c4 #d8d8d8 #d8d8d8 #c4c4c4;white-space:nowrap">Octagonal</div>
<div style="left:639px;top:489px;width:20px;height:21px;background:#b6b6b6;border:1px solid;border-color:#dcdcdc #a4a4a4 #a4a4a4 #dcdcdc"></div>
<svg style="left:643px;top:496px" width="11" height="6"><path d="M0 0H11L5.5 6Z" fill="#868686"/></svg>
<div class="t ct" style="left:567px;top:512px;width:93px;color:#8c8c8c">Infill Style</div>

<!-- seam hiding -->
<div class="t ct" style="left:501px;top:536px;width:215px">Seam Hiding</div>
<div style="left:501px;top:552px;width:215px;height:90px;border:1px solid #555;border-radius:3px;box-shadow:inset 1px 1px 0 rgba(255,255,255,.55)"></div>
<div class="t" style="left:505px;top:559px">Depth</div>
<div class="up t ct" style="left:546px;top:557px;width:34px;height:19px;line-height:17px">1.0</div>
<div class="sl" style="left:581px;top:557px;width:85px;height:19px"></div>
<div class="blk" style="left:584px;top:566px;width:79px;height:2px"></div>
<div class="kn" style="left:652px;top:559px;width:12px;height:15px"></div>
<div style="left:656px;top:561px;width:4px;height:11px;border:1px solid;border-color:#444 #f4f4f4 #f4f4f4 #444;background:#bcbcbc"></div>
<div class="t" style="left:516px;top:589px">Gap</div>
<div class="up t ct" style="left:546px;top:587px;width:34px;height:19px;line-height:17px">1.0</div>
<div class="sl" style="left:581px;top:587px;width:85px;height:19px"></div>
<div class="blk" style="left:584px;top:596px;width:79px;height:2px"></div>
<div class="kn" style="left:617px;top:589px;width:12px;height:15px"></div>
<div style="left:621px;top:591px;width:4px;height:11px;border:1px solid;border-color:#444 #f4f4f4 #f4f4f4 #444;background:#bcbcbc"></div>
<div class="cb" style="left:507px;top:617px"></div>
<svg style="left:509.5px;top:619px" width="10" height="10"><path d="M0.8 4.6L3.6 8.2L8.6 1" fill="none" stroke="#000" stroke-width="2.1"/></svg>
<div class="t" style="left:524px;top:616px">De-String</div>
<div class="cb" style="left:602px;top:617px"></div>
<svg style="left:604.5px;top:619px" width="10" height="10"><path d="M0.8 4.6L3.6 8.2L8.6 1" fill="none" stroke="#000" stroke-width="2.1"/></svg>
<div class="t" style="left:619px;top:616px">Wipe</div>
<div class="t ct" style="left:668px;top:556px;width:46px">Angle</div>
<div style="left:676px;top:572px;width:30px;height:30px;border-radius:50%;border:1px solid #444;background:linear-gradient(135deg,#c8c8c8,#a6a6a6);box-shadow:inset 1px 1px 0 rgba(255,255,255,.5)"></div>
<svg style="left:676px;top:572px" width="30" height="30"><path d="M14.8 14.8L20.5 9.8" stroke="#111" stroke-width="2.2" stroke-linecap="round"/></svg>
<div class="t ct" style="left:668px;top:601px;width:46px">Jitterº</div>
<div class="in" style="left:671px;top:617px;width:40px;height:20px;border-radius:4px;border:1px solid #747474;box-shadow:none;background:linear-gradient(#fff 60%,#e4e4e4);padding-left:3px">0</div>

<!-- right bottom -->
<div class="cb" style="left:733px;top:390px"></div>
<svg style="left:735.3px;top:392.2px" width="10" height="10"><path d="M0.8 4.6L3.6 8.2L8.6 1" fill="none" stroke="#000" stroke-width="2.1"/></svg>
<div class="t b" style="left:750px;top:389px;letter-spacing:0.16px">Show Settings</div>
<div class="t" style="left:731px;top:411px">Settings Level</div>
<svg style="left:886px;top:415px" width="15" height="8"><path d="M0.5 0.5H14.5L7.5 7.5Z" fill="#8a8a8a" stroke="#6f6f6f" stroke-width=".8"/></svg>
<div class="in" style="left:731px;top:428px;width:149px;height:23px;line-height:18px;padding-left:3.5px">Expert</div>
<div class="cbtn" style="left:860px;top:430px;width:18px;height:19px"></div>
<svg style="left:864px;top:436px" width="11" height="6"><path d="M0 0H11L5.5 6Z"/></svg>
<div class="cb" style="left:888px;top:432px;border-color:#c9c9c9 #e4e4e4 #e4e4e4 #c9c9c9;box-shadow:none"></div>
<div class="t ct" style="left:731px;top:462px;width:170px;font-size:12.4px;white-space:pre">Loops:  52.30 [mm/s]</div>
<div class="t ct" style="left:731px;top:477px;width:170px;font-size:12.4px;white-space:pre">Solid:  53.70 [mm/s]</div>
<div class="t ct" style="left:731px;top:492px;width:170px;font-size:12.4px;white-space:pre">Sparse: 68.70 [mm/s]</div>
<div class="up t ct" style="left:731px;top:512px;width:34px;height:20px;line-height:18px">14</div>
<div class="sl" style="left:766px;top:512px;width:135px;height:20px"></div>
<div class="blk" style="left:769px;top:521px;width:129px;height:2px"></div>
<div class="kn" style="left:786px;top:514px;width:12px;height:15px"></div>
<div style="left:790px;top:516px;width:4px;height:11px;border:1px solid;border-color:#444 #f4f4f4 #f4f4f4 #444;background:#bcbcbc"></div>
<svg style="left:769px;top:534px" width="7" height="12"><path d="M7 0V12L0 6Z"/></svg>
<div class="t" style="left:781px;top:532px;font-size:13px">Fast</div>
<div class="t r" style="left:819px;top:532px;width:67px;font-size:13px">Precise</div>
<svg style="left:890px;top:534px" width="7" height="12"><path d="M0 0V12L7 6Z"/></svg>
<div class="ob" style="left:731px;top:552px;width:75px;height:40px;font-size:14px;line-height:16px;padding-top:3px;white-space:normal">Copy<br>Style</div>
<div class="ob" style="left:731px;top:602px;width:75px;height:40px;font-size:14px;line-height:16px;padding-top:3px;white-space:normal"><span style="letter-spacing:0.5px">Delete</span><br>Style</div>
<div class="slv" style="left:811px;top:552px;width:14px;height:71px"></div>
<div class="knv" style="left:812px;top:603px;width:12px;height:17px;background:linear-gradient(90deg,#c2c2c2,#b0b0b0);box-shadow:inset 1px 0 0 rgba(255,255,255,.35)"></div>
<div class="ob" style="left:831px;top:552px;width:70px;height:70px;font-size:15.5px;line-height:68px">Center</div>
<div class="sl" style="left:831px;top:627px;width:70px;height:15px"></div>
<div class="kn" style="left:858px;top:629px;width:17px;height:11px;background:linear-gradient(#c2c2c2,#b0b0b0);box-shadow:inset 0 1px 0 rgba(255,255,255,.35)"></div>

</div></div>
</div>
</body></html>
